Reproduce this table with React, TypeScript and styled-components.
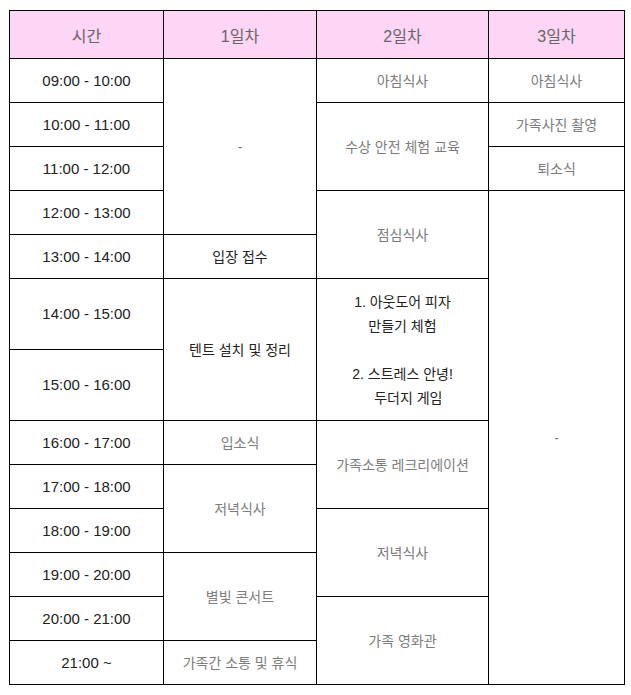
import React from "react";
import styled, { createGlobalStyle } from "styled-components";

const Global = createGlobalStyle`
  html, body { margin: 0; padding: 0; background: #fff; }
  body { font-family: "Liberation Sans", "Noto Sans CJK KR", sans-serif; }
`;

const Page = styled.div`
  padding: 10px 0 0 9px;
`;

const Table = styled.table`
  border-collapse: collapse;
  table-layout: fixed;
  width: 615px;
`;

const HeadCell = styled.th`
  height: 47px;
  padding: 0;
  background: #fdd5f5;
  border: 1px solid #000;
  color: #666;
  font-weight: normal;
  font-size: 16px;
  text-align: center;
  vertical-align: middle;
`;

const Row = styled.tr<{ $tall?: boolean }>`
  height: ${(p) => (p.$tall ? 71 : 44)}px;
`;

const Cell = styled.td<{ $tone?: "dark" | "muted"; $time?: boolean }>`
  padding: 0;
  border: 1px solid #000;
  text-align: center;
  vertical-align: middle;
  font-size: ${(p) => (p.$time ? 15 : 14)}px;
  line-height: 24px;
  color: ${(p) => (p.$tone === "muted" ? "#7d7d7d" : "#222")};
`;

const Lines = styled.div`
  display: inline-block;
  text-align: center;
`;

type C = { text: React.ReactNode; rs?: number; tone?: "dark" | "muted" };

const activity = (
  <Lines>
    1. 아웃도어 피자
    <br />
    만들기 체험
    <br />
    <br />
    2. 스트레스 안녕!
    <br />
    &nbsp;&nbsp;&nbsp;두더지 게임
  </Lines>
);

const rows: { time: string; tall?: boolean; cells: C[] }[] = [
  {
    time: "09:00 - 10:00",
    cells: [
      { text: "-", rs: 4, tone: "muted" },
      { text: "아침식사", tone: "muted" },
      { text: "아침식사", tone: "muted" },
    ],
  },
  {
    time: "10:00 - 11:00",
    cells: [
      { text: "수상 안전 체험 교육", rs: 2, tone: "muted" },
      { text: "가족사진 촬영", tone: "muted" },
    ],
  },
  { time: "11:00 - 12:00", cells: [{ text: "퇴소식", tone: "muted" }] },
  {
    time: "12:00 - 13:00",
    cells: [
      { text: "점심식사", rs: 2, tone: "muted" },
      { text: "-", rs: 10, tone: "muted" },
    ],
  },
  { time: "13:00 - 14:00", cells: [{ text: "입장 접수", tone: "dark" }] },
  {
    time: "14:00 - 15:00",
    tall: true,
    cells: [
      { text: "텐트 설치 및 정리", rs: 2, tone: "dark" },
      { text: activity, rs: 2, tone: "dark" },
    ],
  },
  { time: "15:00 - 16:00", tall: true, cells: [] },
  {
    time: "16:00 - 17:00",
    cells: [
      { text: "입소식", tone: "muted" },
      { text: "가족소통 레크리에이션", rs: 2, tone: "muted" },
    ],
  },
  { time: "17:00 - 18:00", cells: [{ text: "저녁식사", rs: 2, tone: "muted" }] },
  { time: "18:00 - 19:00", cells: [{ text: "저녁식사", rs: 2, tone: "muted" }] },
  { time: "19:00 - 20:00", cells: [{ text: "별빛 콘서트", rs: 2, tone: "muted" }] },
  { time: "20:00 - 21:00", cells: [{ text: "가족 영화관", rs: 2, tone: "muted" }] },
  { time: "21:00 ~", cells: [{ text: "가족간 소통 및 휴식", tone: "muted" }] },
];

export default function App() {
  return (
    <Page>
      <Global />
      <Table>
        <colgroup>
          <col style={{ width: 154 }} />
          <col style={{ width: 153 }} />
          <col style={{ width: 172 }} />
          <col style={{ width: 136 }} />
        </colgroup>
        <thead>
          <tr>
            <HeadCell>시간</HeadCell>
            <HeadCell>1일차</HeadCell>
            <HeadCell>2일차</HeadCell>
            <HeadCell>3일차</HeadCell>
          </tr>
        </thead>
        <tbody>
          {rows.map((r) => (
            <Row key={r.time} $tall={r.tall}>
              <Cell $time $tone="dark">
                {r.time}
              </Cell>
              {r.cells.map((c, i) => (
                <Cell key={i} rowSpan={c.rs} $tone={c.tone}>
                  {c.text}
                </Cell>
              ))}
            </Row>
          ))}
        </tbody>
      </Table>
    </Page>
  );
}
